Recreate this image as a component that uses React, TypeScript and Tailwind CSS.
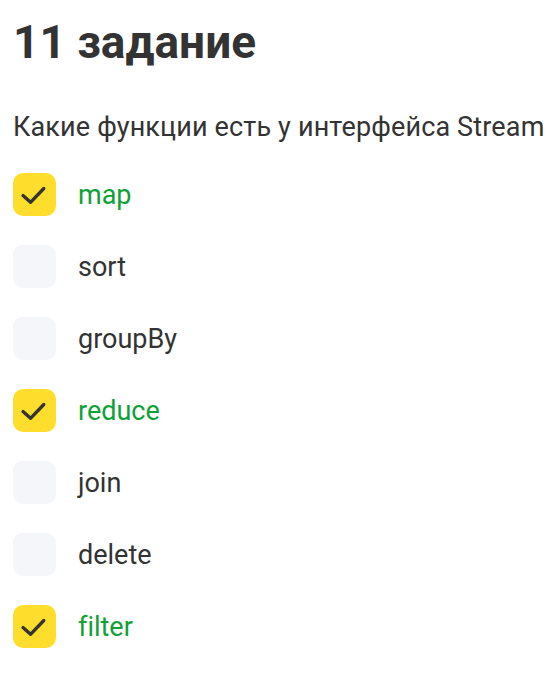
const options = [
  { label: 'map', checked: true },
  { label: 'sort', checked: false },
  { label: 'groupBy', checked: false },
  { label: 'reduce', checked: true },
  { label: 'join', checked: false },
  { label: 'delete', checked: false },
  { label: 'filter', checked: true },
]

function Check() {
  return (
    <svg width="43" height="43" viewBox="0 0 43 43" fill="none">
      <path d="M10 22.5l7.5 6.8L30.8 15.5" stroke="#333" strokeWidth="3.3" strokeLinecap="round" strokeLinejoin="round" />
    </svg>
  )
}

export default function App() {
  return (
    <div className="bg-white min-h-screen px-[13px] pt-[15px] font-['Roboto',sans-serif] text-[#333] [font-variant-ligatures:none]">
      <h1 className="text-[46px] leading-[54px] font-bold">11 задание</h1>
      <p className="mt-[42px] text-[27px] leading-[32px] tracking-[0.15px] whitespace-nowrap">
        Какие функции есть у интерфейса Stream
      </p>
      <ul className="mt-[30px] flex flex-col gap-[29px]">
        {options.map((o) => (
          <li key={o.label} className="flex items-center gap-[22px]">
            <span
              className={`w-[43px] h-[43px] rounded-[10px] flex items-center justify-center ${
                o.checked ? 'bg-[#FFDD2D]' : 'bg-[#F5F6FA]'
              }`}
            >
              {o.checked && <Check />}
            </span>
            <span className={`text-[27px] leading-[32px] pt-[1px] ${o.checked ? 'text-[#0FA138]' : 'text-[#333]'}`}>
              {o.label}
            </span>
          </li>
        ))}
      </ul>
    </div>
  )
}
